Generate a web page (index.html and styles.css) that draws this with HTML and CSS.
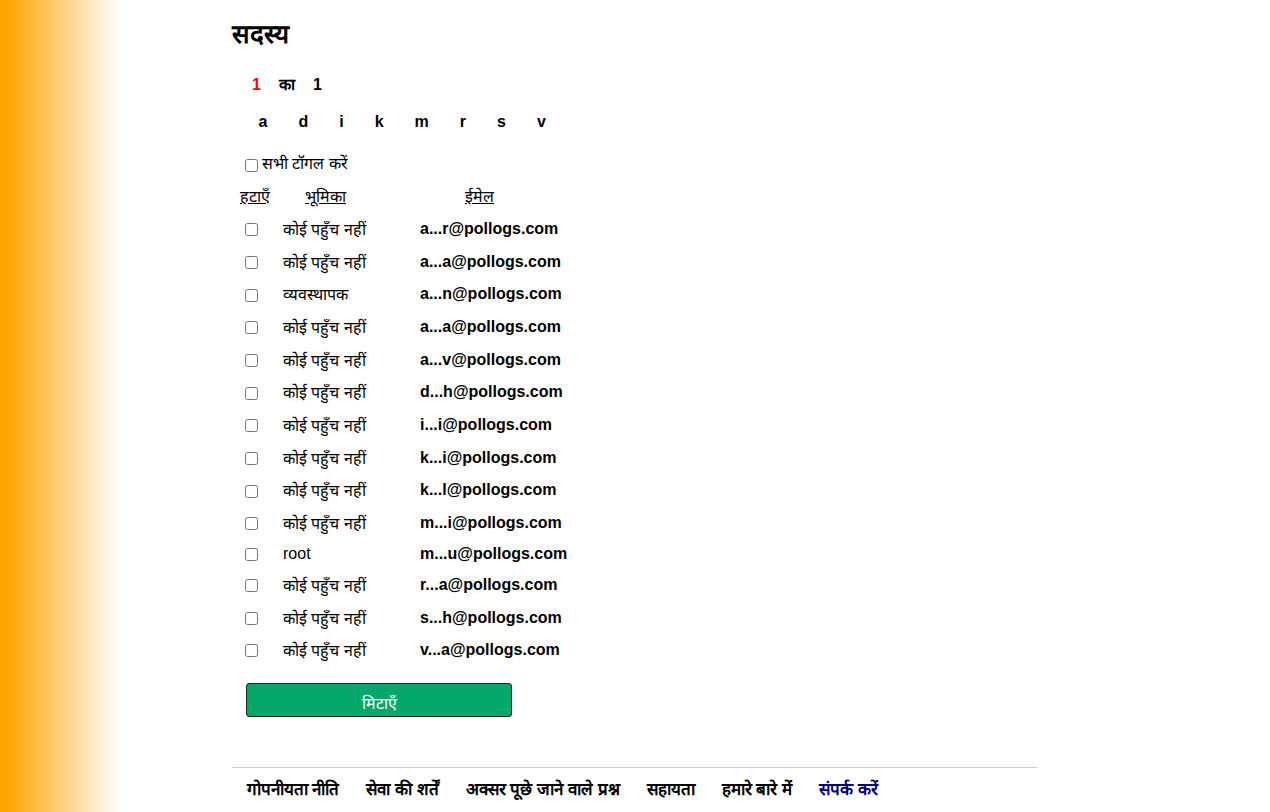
FILE: index.html
```html
<!DOCTYPE html>
<html lang="hi">
<head>
<meta charset="utf-8">
<title>सदस्य</title>
<link rel="stylesheet" href="styles.css">
</head>
<body>
<div class="page">
  <h2 class="title">सदस्य</h2>
  <div class="pager"><span class="cur">1</span><span>का</span><span>1</span></div>
  <div class="letters"><a>a</a><a>d</a><a>i</a><a>k</a><a>m</a><a>r</a><a>s</a><a>v</a></div>
  <form class="members">
    <label class="toggle"><input type="checkbox" class="cb">सभी टॉगल करें</label>
    <table class="list">
      <thead>
        <tr class="head"><th class="c1">हटाएँ</th><th class="c2">भूमिका</th><th class="c3">ईमेल</th></tr>
      </thead>
      <tbody>
        <tr><td class="c1"><input type="checkbox" class="cb"></td><td class="c2">कोई पहुँच नहीं</td><td class="c3">a...r@pollogs.com</td></tr>
        <tr><td class="c1"><input type="checkbox" class="cb"></td><td class="c2">कोई पहुँच नहीं</td><td class="c3">a...a@pollogs.com</td></tr>
        <tr><td class="c1"><input type="checkbox" class="cb"></td><td class="c2">व्यवस्थापक</td><td class="c3">a...n@pollogs.com</td></tr>
        <tr><td class="c1"><input type="checkbox" class="cb"></td><td class="c2">कोई पहुँच नहीं</td><td class="c3">a...a@pollogs.com</td></tr>
        <tr><td class="c1"><input type="checkbox" class="cb"></td><td class="c2">कोई पहुँच नहीं</td><td class="c3">a...v@pollogs.com</td></tr>
        <tr><td class="c1"><input type="checkbox" class="cb"></td><td class="c2">कोई पहुँच नहीं</td><td class="c3">d...h@pollogs.com</td></tr>
        <tr><td class="c1"><input type="checkbox" class="cb"></td><td class="c2">कोई पहुँच नहीं</td><td class="c3">i...i@pollogs.com</td></tr>
        <tr><td class="c1"><input type="checkbox" class="cb"></td><td class="c2">कोई पहुँच नहीं</td><td class="c3">k...i@pollogs.com</td></tr>
        <tr><td class="c1"><input type="checkbox" class="cb"></td><td class="c2">कोई पहुँच नहीं</td><td class="c3">k...l@pollogs.com</td></tr>
        <tr><td class="c1"><input type="checkbox" class="cb"></td><td class="c2">कोई पहुँच नहीं</td><td class="c3">m...i@pollogs.com</td></tr>
        <tr class="short"><td class="c1"><input type="checkbox" class="cb"></td><td class="c2">root</td><td class="c3">m...u@pollogs.com</td></tr>
        <tr><td class="c1"><input type="checkbox" class="cb"></td><td class="c2">कोई पहुँच नहीं</td><td class="c3">r...a@pollogs.com</td></tr>
        <tr><td class="c1"><input type="checkbox" class="cb"></td><td class="c2">कोई पहुँच नहीं</td><td class="c3">s...h@pollogs.com</td></tr>
        <tr><td class="c1"><input type="checkbox" class="cb"></td><td class="c2">कोई पहुँच नहीं</td><td class="c3">v...a@pollogs.com</td></tr>
      </tbody>
    </table>
    <button type="button" class="delete">मिटाएँ</button>
  </form>
  <footer class="footer">
    <a>गोपनीयता नीति</a><a>सेवा की शर्तें</a><a>अक्सर पूछे जाने वाले प्रश्न</a><a>सहायता</a><a>हमारे बारे में</a><a class="contact">संपर्क करें</a>
  </footer>
</div>
</body>
</html>
```
FILE: styles.css
```css
html, body {
  margin: 0;
  padding: 0;
}
body {
  background: #fff linear-gradient(to right, #ffa500 8px, #ffffff 120px) no-repeat;
  background-size: 120px 100%;
  min-height: 812px;
  font-family: "Liberation Sans", Arial, sans-serif;
  font-size: 16px;
  color: #000;
}
.page {
  margin-left: 232px;
  width: 805px;
}
.title {
  margin: 0;
  padding-top: 16px;
  font-size: 26px;
  font-weight: bold;
  line-height: 36px;
}
.pager {
  display: flex;
  gap: 18px;
  margin-top: 21px;
  padding-left: 20px;
  height: 24px;
  line-height: 24px;
  font-weight: bold;
}
.pager .cur {
  color: #ff0000;
}
.letters {
  display: flex;
  margin-top: 13px;
  padding-left: 11px;
  height: 24px;
  line-height: 24px;
  font-weight: bold;
}
.letters a {
  padding: 0 15.5px;
}
.members {
  margin: 0;
}
.cb {
  width: 13px;
  height: 13px;
  margin: 0;
  vertical-align: middle;
}
.toggle {
  display: flex;
  align-items: center;
  margin-top: 18px;
  padding-left: 13px;
  height: 24px;
  line-height: 24px;
}
.toggle .cb {
  margin-right: 4px;
  margin-top: 2px;
}
.list {
  border-collapse: collapse;
  margin-top: 9px;
  margin-left: 6px;
}
.list td, .list th {
  padding: 0;
  text-align: left;
  white-space: nowrap;
}
.list .head {
  height: 27.67px;
  vertical-align: top;
}
.list th {
  font-weight: normal;
  text-decoration: underline;
  line-height: 24px;
}
.list tbody tr {
  height: 32.67px;
}
.list tbody tr.short {
  height: 29.33px;
}
.list th.c1 { padding-left: 2px; width: 42px; }
.list th.c2 { padding-left: 23px; width: 115px; }
.list th.c3 { padding-left: 45px; }
.list td.c1 { padding-left: 7px; width: 37px; }
.list td.c2 { padding-left: 1px; width: 137px; }
.list td.c3 { font-weight: bold; }
.delete {
  display: block;
  margin: 16px 0 0 14px;
  width: 266px;
  height: 34px;
  padding: 6px 0 0;
  background: #04a86b;
  color: #fff;
  border: 1px solid #222;
  border-radius: 3px;
  font-family: inherit;
  font-size: 16px;
}
.footer {
  margin-top: 50px;
  border-top: 1px solid #cccccc;
  padding-top: 10px;
  padding-left: 1px;
  display: flex;
  line-height: 24px;
  font-size: 17px;
  font-weight: bold;
}
.footer a {
  padding: 0 13.5px;
  color: #000;
}
.footer a.contact {
  color: #000080;
}
```
